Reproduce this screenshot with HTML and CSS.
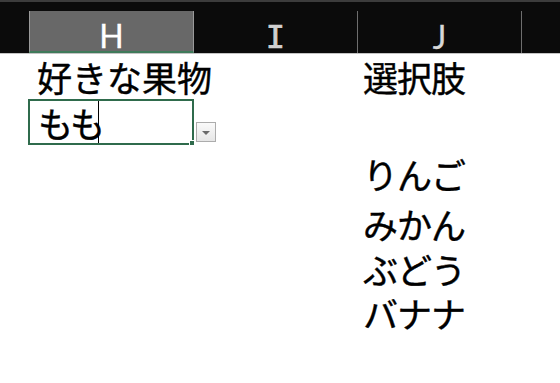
FILE: index.html
```html
<!DOCTYPE html>
<html lang="ja">
<head>
  <meta charset="UTF-8">
  <title>好きな果物</title>
  <link rel="stylesheet" href="styles.css">
</head>
<body>

<div class="colbar">
  <div class="corner"></div>
  <div class="colhead active">H</div>
  <div class="colhead serif-i">I</div>
  <div class="colhead">J</div>
  <div class="colhead rest"></div>
</div>

<div class="grid">
  <div class="cell h r1">好きな果物</div>
  <div class="cell j r1">選択肢</div>

  <div class="cell h r2 selected">もも<span class="caret"></span>
    <div class="dropdown"><span class="arrow"></span></div>
    <div class="handle"></div>
  </div>

  <div class="cell j r3">りんご</div>
  <div class="cell j r4">みかん</div>
  <div class="cell j r5">ぶどう</div>
  <div class="cell j r6">バナナ</div>
</div>

</body>
</html>
```

FILE: styles.css
```css
body {
  margin: 0;
  background: #fff;
  font-family: "Noto Sans CJK JP", "Noto Sans", sans-serif;
  color: #000;
  overflow: hidden;
}

/* Column header strip */
.colbar {
  display: flex;
  background: #0b0b0b;
  border-top: 2px solid #3c3c3c;
  padding-top: 9px;
  border-bottom: 1px solid #c4c4c4;
}

.corner {
  width: 29px;
  flex: none;
}

.colhead {
  width: 164px;
  height: 42px;
  flex: none;
  box-sizing: border-box;
  padding-top: 9px;
  border-right: 1px solid #6e6e6e;
  color: #d8d8d8;
  font-family: Lato, sans-serif;
  font-size: 32px;
  line-height: 34px;
  text-align: center;
  -webkit-text-stroke: 0.3px currentColor;
}

.colhead.serif-i {
  font-family: "DejaVu Sans Mono", monospace;
  font-size: 32px;
  color: #d0d0d0;
  -webkit-text-stroke: 0.7px currentColor;
}

.colhead.active {
  width: 165px;
  background: #686868;
  color: #fff;
  border-left: 1px solid #9a9a9a;
  border-right: 1px solid #9a9a9a;
  border-bottom: 2px solid #3f7a5a;
  padding-top: 8px;
}

.colhead.rest {
  border-right: none;
  width: 40px;
}

/* Cells */
.grid {
  display: grid;
  grid-template-columns: 29px 165px 164px 164px;
  grid-template-rows: 45px 47px 54px 47px 42px 47px;
}

.cell {
  display: flex;
  align-items: center;
  font-size: 35px;
  line-height: 1;
  white-space: nowrap;
  -webkit-text-stroke: 0.4px #000;
}

.cell.h { grid-column: 2; padding-left: 8px; }
.cell.j { grid-column: 4; padding-left: 5px; letter-spacing: -1px; }

.r1 { grid-row: 1; }
.r2 { grid-row: 2; }
.r3 { grid-row: 3; }
.r4 { grid-row: 4; }
.r5 { grid-row: 5; }
.r6 { grid-row: 6; }

.selected {
  position: relative;
  margin-left: -1px;
  height: 46px;
  box-sizing: border-box;
  border: 2px solid #2f6b4c;
  padding-left: 7px;
  letter-spacing: -3px;
}

.caret {
  display: inline-block;
  width: 0;
  height: 42px;
  border-left: 1px solid #000;
  margin-left: -4px;
}

.dropdown {
  position: absolute;
  left: 166px;
  top: 21px;
  width: 20px;
  height: 20px;
  box-sizing: border-box;
  border: 1px solid #acacac;
  background: linear-gradient(#fafafa, #e6e6e6);
  display: flex;
  align-items: center;
  justify-content: center;
}

.arrow {
  width: 0;
  height: 0;
  border-left: 4px solid transparent;
  border-right: 4px solid transparent;
  border-top: 4px solid #6a6a6a;
  margin-top: 1px;
}

.handle {
  position: absolute;
  right: -3px;
  bottom: -3px;
  width: 4px;
  height: 4px;
  background: #2f6b4c;
  border: 1px solid #fff;
}
```
